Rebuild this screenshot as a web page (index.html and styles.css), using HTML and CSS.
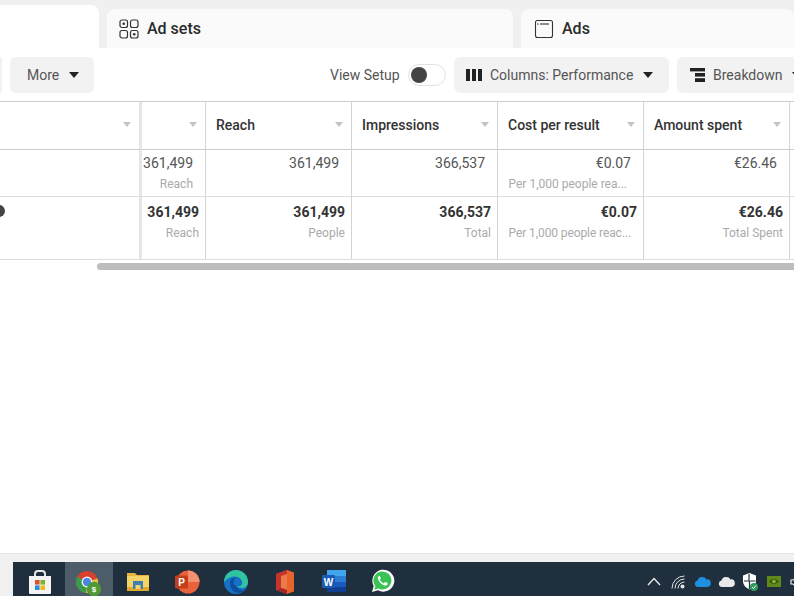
FILE: index.html
```html
<!DOCTYPE html>
<html lang="en">
<head>
  <meta charset="UTF-8">
  <title>Ads Manager</title>
  <link rel="stylesheet" href="styles.css">
</head>
<body>
  <div class="page">
    <div class="tabs">
      <div class="tab tab-active"></div>
      <div class="tab tab-sets">
        <svg class="tab-icon" width="20" height="20" viewBox="0 0 20 20" fill="none" stroke="#333" stroke-width="1.2">
          <rect x="1" y="1" width="7.5" height="7.5" rx="2"/><rect x="11.5" y="1" width="7.5" height="7.5" rx="2"/>
          <rect x="1" y="11.5" width="7.5" height="7.5" rx="2"/><rect x="11.5" y="11.5" width="7.5" height="7.5" rx="2"/>
          <circle cx="4.75" cy="4.75" r="1.3" fill="#333" stroke="none"/><circle cx="15.25" cy="15.25" r="1.3" fill="#333" stroke="none"/>
        </svg>
        Ad sets
      </div>
      <div class="tab tab-ads">
        <svg class="tab-icon" width="20" height="20" viewBox="0 0 20 20" fill="none" stroke="#333" stroke-width="1.1">
          <rect x="1.5" y="1.5" width="17" height="17" rx="2"/>
          <path d="M6 5h9"/><circle cx="3.9" cy="5" r=".7" fill="#333" stroke="none"/>
        </svg>
        Ads
      </div>
    </div>

    <div class="toolbar">
      <div class="btn btn-cut"></div>
      <div class="btn btn-more">More <span class="caret"></span></div>
      <span class="setup-label">View Setup</span>
      <span class="toggle"><span class="knob"></span></span>
      <div class="btn btn-columns">
        <svg width="16" height="12" viewBox="0 0 16 12" fill="#222"><rect width="4" height="12"/><rect x="6" width="4" height="12"/><rect x="12" width="4" height="12"/></svg>
        <span>Columns: Performance</span><span class="caret"></span>
      </div>
      <div class="btn btn-breakdown">
        <svg width="15" height="14" viewBox="0 0 15 14" fill="#222"><rect width="15" height="3.4"/><rect x="5" y="5" width="10" height="3.6"/><rect x="5" y="10.2" width="10" height="3.8"/></svg>
        <span>Breakdown</span><span class="caret"></span>
      </div>
    </div>

    <div class="table">
      <div class="cell head first"><span class="sort"></span></div>
      <div class="cell head"><span class="sort"></span></div>
      <div class="cell head"><span class="head-name">Reach</span><span class="sort"></span></div>
      <div class="cell head"><span class="head-name">Impressions</span><span class="sort"></span></div>
      <div class="cell head"><span class="head-name">Cost per result</span><span class="sort"></span></div>
      <div class="cell head"><span class="head-name">Amount spent</span><span class="sort"></span></div>
      <div class="cell head last"></div>

      <div class="cell row first"></div>
      <div class="cell row"><div class="val">361,499</div><div class="sub">Reach</div></div>
      <div class="cell row"><div class="val">361,499</div></div>
      <div class="cell row"><div class="val">366,537</div></div>
      <div class="cell row"><div class="val">€0.07</div><div class="sub sub-cut">Per 1,000 people rea...</div></div>
      <div class="cell row"><div class="val">€26.46</div></div>
      <div class="cell row last"></div>

      <div class="cell total first"><span class="dot"></span></div>
      <div class="cell total"><div class="val">361,499</div><div class="sub">Reach</div></div>
      <div class="cell total"><div class="val">361,499</div><div class="sub">People</div></div>
      <div class="cell total"><div class="val">366,537</div><div class="sub">Total</div></div>
      <div class="cell total"><div class="val">€0.07</div><div class="sub sub-cut">Per 1,000 people reac...</div></div>
      <div class="cell total"><div class="val">€26.46</div><div class="sub">Total Spent</div></div>
      <div class="cell total last"></div>
    </div>

    <div class="scrollbar"></div>
    <div class="blank"></div>
    <div class="strip"></div>

    <div class="taskbar-wrap">
      <div class="taskbar">
        <div class="app">
          <svg width="26" height="26" viewBox="0 0 26 26"><path d="M8 8V5a3 3 0 0 1 3-3h4a3 3 0 0 1 3 3v3" fill="none" stroke="#e8e8e8" stroke-width="2"/><path d="M2 7h22v17a1 1 0 0 1-1 1H3a1 1 0 0 1-1-1z" fill="#f4f4f4"/><rect x="8" y="11" width="4.6" height="4.6" fill="#e2502b"/><rect x="13.4" y="11" width="4.6" height="4.6" fill="#7db12f"/><rect x="8" y="16.4" width="4.6" height="4.6" fill="#2b8fd8"/><rect x="13.4" y="16.4" width="4.6" height="4.6" fill="#f5b820"/></svg>
        </div>
        <div class="app app-on">
          <svg width="28" height="28" viewBox="0 0 28 28"><circle cx="12" cy="13" r="11" fill="#d8402f"/><path d="M12 13 L22.5 9.5 A11 11 0 0 1 11 24z" fill="#e8c33a"/><path d="M12 13 L11 24 A11 11 0 0 1 2.4 7.5z" fill="#3c9a4c"/><circle cx="12" cy="13" r="5.4" fill="#fff"/><circle cx="12" cy="13" r="4.2" fill="#4a87e0"/><circle cx="19" cy="20" r="7.2" fill="#4f9a34"/><text x="19" y="23" class="badge-s">$</text></svg>
        </div>
        <div class="app">
          <svg width="24" height="24" viewBox="0 0 24 24"><path d="M1 4h8l2 2h12v5H1z" fill="#e6b33c"/><rect x="1" y="7" width="22" height="15" fill="#f6d365"/><rect x="1" y="18" width="22" height="4" fill="#e2a92f"/><path d="M7 12h10v8H7z" fill="#3f7fb5"/><rect x="9.5" y="16" width="5" height="4" fill="#f6d365"/></svg>
        </div>
        <div class="app">
          <svg width="26" height="26" viewBox="0 0 26 26"><circle cx="14" cy="13" r="11.5" fill="#e8623c"/><path d="M14 13V1.5A11.5 11.5 0 0 1 25.5 13z" fill="#f2906f"/><rect x="1" y="6.5" width="13" height="13" rx="1.5" fill="#c43e1c"/><text x="7.5" y="17" class="badge-p">P</text></svg>
        </div>
        <div class="app">
          <svg width="26" height="26" viewBox="0 0 26 26"><circle cx="13" cy="13" r="12" fill="#1672c8"/><path d="M1 13A12 12 0 0 1 25 13c0 3.500-2.500 6-6 6-2.500 0-4.500-.8-5.500-2 3 .5 5.500-.5 5.500-3 0-3.500-3-6.500-7-6.500-5 0-8.500 2.500-11 5.500z" fill="#2fc3a0"/><path d="M7 14c0-3 2.500-5.500 5.500-5.500 3.500 0 6.500 2.500 6.500 5.500 0 2-2 3-4.500 3-1 0-1 .5-.5 1 1.500 2.500 5 3.500 8 2.500-2 2.500-5 3.500-8 3.500-4-1-7-5-7-10z" fill="#0d4f9e"/><path d="M12.500 8.500c3.500 0 6.500 2.500 6.500 5.500 0 2-2 3-4.500 3-2 0-4-1-4-3.500 0-2 1-4 2-5z" fill="#1672c8"/></svg>
        </div>
        <div class="app">
          <svg width="20" height="26" viewBox="0 0 20 26"><path d="M12 1l7 2.500v19L12 25 1 21V5z" fill="#e8642c"/><path d="M12 1L1 5v16l5-2V7l6-2z" fill="#c4342c"/><path d="M6 7v12l6 1V5z" fill="#fff" opacity=".15"/><path d="M1 21l11 4v-4l-6-2z" fill="#a3262a"/></svg>
        </div>
        <div class="app">
          <svg width="26" height="24" viewBox="0 0 26 24"><rect x="6" y="1" width="19" height="22" rx="1" fill="#2b7cd3"/><rect x="6" y="1" width="19" height="6" fill="#41a5ee"/><rect x="6" y="13" width="19" height="5" fill="#185abd"/><rect x="6" y="18" width="19" height="5" fill="#103f91"/><rect x="1" y="6" width="13" height="13" rx="1" fill="#1a5bb8"/><text x="7.5" y="16.500" class="badge-w">W</text></svg>
        </div>
        <div class="app">
          <svg width="24" height="24" viewBox="0 0 24 24"><path d="M1 23l1.700-6A11 11 0 1 1 7 21.300z" fill="#fff"/><path d="M3.300 20.700l1-3.700A9 9 0 1 1 7.500 19.600z" fill="#39c354"/><path d="M8.600 6.800c-.5 0-1 .3-1.300.9-.7 1.400-.3 3 1 4.900 1.500 2.100 3.400 3.500 5.300 3.900 1.300.3 2.500-.3 2.900-1.300.2-.5.200-1 0-1.200l-2.100-1c-.3-.1-.5 0-.7.200l-.8 1c-.2.200-.4.200-.7.100-1.500-.7-2.600-1.800-3.300-3.200-.1-.2-.1-.4.100-.6l.6-.8c.2-.2.200-.4.100-.7l-.9-2c-.1-.1-.2-.2-.200-.2z" fill="#fff"/></svg>
        </div>
        <div class="tray">
          <div class="tray-item"><svg width="14" height="9" viewBox="0 0 14 9" fill="none" stroke="#e8e8e8" stroke-width="1.400"><path d="M1 8l6-6.500L13 8"/></svg></div>
          <div class="tray-item"><svg width="14" height="14" viewBox="0 0 14 14" fill="none" stroke="#e4e4e4" stroke-width="1"><path d="M1 13.500A12.500 12.500 0 0 1 13.500 1"/><path d="M4 13.500A9.500 9.500 0 0 1 13.500 4"/><path d="M7 13.500A6.500 6.500 0 0 1 13.500 7"/><circle cx="11.500" cy="11.500" r="2" fill="#e4e4e4" stroke="none"/></svg></div>
          <div class="tray-item"><svg width="17" height="11" viewBox="0 0 17 11"><path d="M4 11a3.300 3.300 0 0 1-.6-6.500A5 5 0 0 1 12.500 3.400 3.800 3.800 0 0 1 13.500 11z" fill="#1e8fe0"/></svg></div>
          <div class="tray-item"><svg width="17" height="11" viewBox="0 0 17 11"><path d="M4 11a3.300 3.300 0 0 1-.6-6.500A5 5 0 0 1 12.500 3.400 3.800 3.800 0 0 1 13.500 11z" fill="#e9e9e9"/></svg></div>
          <div class="tray-item"><svg width="16" height="18" viewBox="0 0 16 18"><path d="M7.500 0L14 2.500V8c0 4-3 7-6.500 8.500C4 15 1 12 1 8V2.500z" fill="#fff"/><path d="M7 1v7H2M8 8h5.500M7.500 8v8" stroke="#1f2f3d" stroke-width="1.200" fill="none"/><circle cx="12" cy="14" r="4" fill="#2e9a5a"/><path d="M10 14l1.500 1.500 2.500-3" stroke="#fff" stroke-width="1" fill="none"/></svg></div>
          <div class="tray-item"><svg width="14" height="11" viewBox="0 0 14 11"><rect width="14" height="11" fill="#5f8a1a"/><path d="M2 5.500C4 2.500 9 2 12 5.500 9 9 4 8.500 2 5.500z" fill="#3c5c0c"/><circle cx="7" cy="5.500" r="1.800" fill="#8fb634"/></svg></div>
          <div class="tray-item tray-last"><svg width="8" height="12" viewBox="0 0 8 12" fill="none" stroke="#e8e8e8" stroke-width="1.200"><path d="M1 4h2l4-3v10L3 8H1z"/></svg></div>
        </div>
      </div>
    </div>
  </div>
</body>
</html>
```

FILE: styles.css
```css
html, body {
  margin: 0;
  padding: 0;
  background: #fff;
  font-family: Roboto, "Liberation Sans", sans-serif;
  color: #444;
  overflow: hidden;
}
.page {
  display: flex;
  flex-direction: column;
  width: 794px;
  height: 596px;
  overflow: hidden;
}
.tabs {
  display: flex;
  align-items: flex-end;
  gap: 8px;
  height: 48px;
  background: #f0f0f0;
  flex-shrink: 0;
}
.tab {
  display: flex;
  align-items: center;
  height: 39px;
  font-size: 16px;
  font-weight: 500;
  color: #2b2b2b;
  background: #fafafa;
  border-radius: 8px 8px 0 0;
  box-sizing: border-box;
}
.tab-active {
  width: 99px;
  height: 43px;
  background: #fff;
  border-radius: 0 8px 0 0;
}
.tab-sets {
  width: 406px;
  padding-left: 12px;
}
.tab-ads {
  flex: 1;
  padding-left: 13px;
}
.tab-icon {
  margin-right: 8px;
}
.toolbar {
  display: flex;
  align-items: center;
  height: 53px;
  flex-shrink: 0;
  overflow: hidden;
  border-bottom: 1px solid #ccc;
  box-sizing: content-box;
  font-size: 14px;
  color: #555;
}
.btn {
  display: flex;
  align-items: center;
  height: 36px;
  background: #f2f2f2;
  border-radius: 6px;
  box-sizing: border-box;
  flex-shrink: 0;
}
.btn-cut {
  width: 2px;
  border-radius: 0 6px 6px 0;
}
.btn-more {
  width: 84px;
  margin-left: 8px;
  padding-left: 17px;
  gap: 10px;
}
.setup-label {
  margin-left: 236px;
  width: 78px;
  flex-shrink: 0;
}
.toggle {
  display: flex;
  align-items: center;
  width: 38px;
  height: 22px;
  margin-left: 0;
  padding-left: 2px;
  box-sizing: border-box;
  border: 1px solid #e2e2e2;
  border-radius: 11px;
  flex-shrink: 0;
}
.knob {
  width: 16px;
  height: 16px;
  background: #444;
  border-radius: 50%;
}
.btn-columns {
  width: 215px;
  margin-left: 8px;
  padding-left: 12px;
  gap: 8px;
}
.btn-columns .caret {
  margin-left: 2px;
}
.btn-breakdown {
  width: 140px;
  margin-left: 8px;
  padding-left: 13px;
  gap: 8px;
}
.btn-breakdown .caret {
  margin-left: 2px;
}
.caret {
  display: inline-block;
  width: 0;
  height: 0;
  border-left: 5.5px solid transparent;
  border-right: 5.5px solid transparent;
  border-top: 6px solid #222;
}
.table {
  display: grid;
  grid-template-columns: 142px 64px 146px 146px 146px 146px 4px;
  grid-template-rows: 48px 47px 62px;
  flex-shrink: 0;
  border-bottom: 1px solid #ddd;
  overflow: hidden;
}
.cell {
  box-sizing: border-box;
  border-right: 1px solid #d4d4d4;
  border-bottom: 1px solid #ddd;
  min-width: 0;
}
.cell.first {
  border-right: 3px solid #e6e6e6;
}
.cell.last {
  border-right: none;
}
.head {
  display: flex;
  align-items: center;
  justify-content: space-between;
  padding: 0 8px 2px 10px;
  border-bottom-color: #ccc;
}
.head.first,
.cell.head:nth-child(2) {
  justify-content: flex-end;
}
.head.last {
  padding: 0;
}
.head-name {
  font-size: 14px;
  font-weight: 500;
  color: #333;
}
.sort {
  display: inline-block;
  width: 0;
  height: 0;
  border-left: 4px solid transparent;
  border-right: 4px solid transparent;
  border-top: 5px solid #c4c4c4;
}
.row,
.total {
  text-align: right;
  white-space: nowrap;
}
.row {
  padding: 4px 12px 0 0;
}
.total {
  padding: 6px 6px 0 0;
  border-bottom: none;
}
.val {
  font-size: 14px;
  line-height: 18px;
  color: #555;
}
.total .val {
  font-weight: 700;
  color: #333;
}
.sub {
  margin-top: 4px;
  font-size: 12px;
  line-height: 16px;
  color: #aaa;
}
.total .sub {
  margin-top: 4px;
}
.row .sub-cut {
  margin-right: 4px;
}
.total .sub-cut {
  margin-right: 6px;
  letter-spacing: -0.1px;
}
.dot {
  display: block;
  width: 12px;
  height: 12px;
  margin: 2px 0 0 -7px;
  background: #444;
  border-radius: 50%;
}
.scrollbar {
  height: 7px;
  margin: 3px 0 0 97px;
  background: #bdbdbd;
  border-radius: 4px 0 0 4px;
  flex-shrink: 0;
}
.blank {
  flex: 1;
}
.strip {
  height: 9px;
  background: #f1f1f1;
  border-top: 1px solid #e6e6e6;
  box-sizing: border-box;
  flex-shrink: 0;
}
.taskbar-wrap {
  height: 34px;
  flex-shrink: 0;
  padding-left: 13px;
  background: #f1f1f1;
}
.taskbar {
  display: flex;
  height: 34px;
  padding-left: 3px;
  background: #1f2f3d;
  overflow: hidden;
}
.app {
  display: flex;
  justify-content: center;
  width: 49px;
  padding-top: 7px;
  padding-right: 2px;
  box-sizing: border-box;
  flex-shrink: 0;
}
.app-on {
  width: 48px;
  margin-right: 1px;
  padding-right: 0;
  background: #4c5c68;
}
.tray {
  display: flex;
  margin-left: auto;
  width: 152px;
  flex-shrink: 0;
}
.tray-item {
  display: flex;
  align-items: center;
  justify-content: center;
  width: 24px;
  height: 34px;
  padding-top: 5px;
  box-sizing: border-box;
  flex-shrink: 0;
}
.tray-last {
  width: 8px;
  margin-left: 4px;
}
.badge-s,
.badge-p,
.badge-w {
  font-family: "Liberation Sans", sans-serif;
  font-weight: 700;
  fill: #fff;
  text-anchor: middle;
}
.badge-s {
  font-size: 8px;
}
.badge-p,
.badge-w {
  font-size: 10px;
}
```
